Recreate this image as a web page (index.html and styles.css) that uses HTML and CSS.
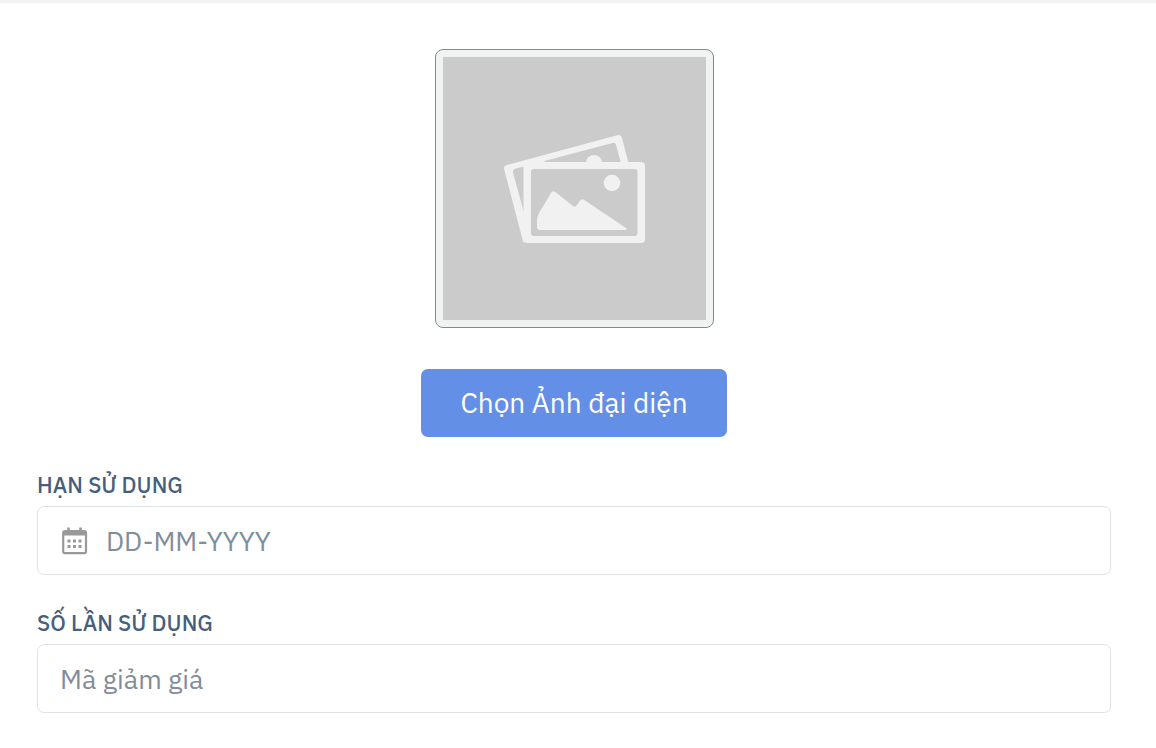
FILE: index.html
```html
<!DOCTYPE html>
<html lang="vi">
<head>
    <meta charset="UTF-8">
    <meta name="viewport" content="width=device-width, initial-scale=1.0">
    <title>Mã giảm giá</title>
    <link rel="stylesheet" href="styles.css">
</head>
<body>
    <form class="coupon-form">
        <div class="avatar">
            <div class="avatar-frame">
                <svg class="avatar-placeholder" viewBox="0 0 263 263" role="img" aria-label="Ảnh đại diện">
                    <rect width="263" height="263" fill="#cbcbcb"/>
                    <g transform="translate(-443 -57)" fill="#f1f1f1">
                        <path d="M504.200 169.500 Q503.200 166 507 165 L617 135.300 Q621 134.300 622 138 L629 165 H621.500 L616 145 Q615.300 142.300 612.500 143 L515 168.800 Q512.300 169.700 513 172.500 L524 213 V243 Q523.500 243 522.500 239.500 Z"/>
                        <path d="M524 163 L530 161 L546 161 L524 169 Z"/>
                        <circle cx="594" cy="163" r="8"/>
                        <rect x="523.500" y="162" width="121.500" height="81" rx="4"/>
                        <rect x="531" y="169" width="106.500" height="67" rx="3" fill="#cbcbcb"/>
                        <circle cx="612" cy="183" r="8.300"/>
                        <path d="M537 220 Q537 217 539 213 L551 193 Q553 190 556 192.500 L573 206 Q575 207.500 577 205 L580 200.500 Q582 198 585 200.500 L626 228 Q628 230 625 230 H540 Q537 230 537 227 Z"/>
                    </g>
                </svg>
            </div>
            <button type="button" class="avatar-button">Chọn Ảnh đại diện</button>
        </div>

        <div class="form-group">
            <label for="expiryDate">Hạn sử dụng</label>
            <div class="date-picker">
                <svg class="date-icon" viewBox="0 0 26 28" aria-hidden="true">
                    <path d="M6.500 0.500V5M18.500 0.500V5" stroke="#999" stroke-width="2.600"/>
                    <rect x="1.200" y="4.200" width="22.800" height="22" rx="2" fill="none" stroke="#999" stroke-width="2.200"/>
                    <path d="M1 4h23v4.500H1z" fill="#999"/>
                    <path d="M5.500 14h3m2.500 0h3m2.500 0h3M5.500 19.500h3m2.500 0h3m2.500 0h3" stroke="#999" stroke-width="2.800"/>
                </svg>
                <input type="text" id="expiryDate" class="form-control" placeholder="DD-MM-YYYY">
            </div>
        </div>

        <div class="form-group">
            <label for="usageCount">Số lần sử dụng</label>
            <input type="text" id="usageCount" class="form-control" placeholder="Mã giảm giá">
        </div>
    </form>
</body>
</html>
```
FILE: styles.css
```css
* {
    box-sizing: border-box;
}

body {
    margin: 0;
    border-top: 3px solid #f1f3f3;
    background-color: #fff;
    font-family: 'IBM Plex Sans', Roboto, sans-serif;
}

.coupon-form {
    padding: 46px 45px 32px 37px;
}

.avatar {
    display: flex;
    flex-direction: column;
    align-items: center;
    gap: 41px;
    margin-bottom: 36px;
}

.avatar-frame {
    padding: 7px;
    border: 1px solid #7f8a96;
    border-radius: 8px;
    background-color: #f1f3f3;
}

.avatar-placeholder {
    display: block;
    width: 263px;
    height: 263px;
}

.avatar-button {
    height: 68px;
    padding: 0 39px 2px;
    border: none;
    border-radius: 7px;
    background-color: #638fe6;
    color: #fff;
    font-family: inherit;
    font-size: 28px;
    cursor: pointer;
}

.avatar-button:hover {
    background-color: #4f7fdd;
}

.form-group {
    margin-bottom: 36px;
}

.form-group:last-child {
    margin-bottom: 0;
}

.form-group label {
    display: block;
    margin-bottom: 9px;
    color: #475f7b;
    font-size: 22px;
    font-weight: 500;
    line-height: 24px;
    text-transform: uppercase;
}

.form-control {
    display: block;
    width: 100%;
    height: 69px;
    padding: 0 22px;
    border: 1px solid #dfe3e7;
    border-radius: 7px;
    background-color: #fff;
    color: #475f7b;
    font-family: inherit;
    font-size: 27px;
}

.form-control::placeholder {
    color: #828d99;
    opacity: 1;
}

.form-control:focus {
    outline: none;
    border-color: #5a8dee;
}

.date-picker {
    position: relative;
}

.date-picker .form-control {
    padding-left: 68px;
}

.date-icon {
    position: absolute;
    top: 21px;
    left: 25px;
    width: 26px;
    height: 28px;
}
```
